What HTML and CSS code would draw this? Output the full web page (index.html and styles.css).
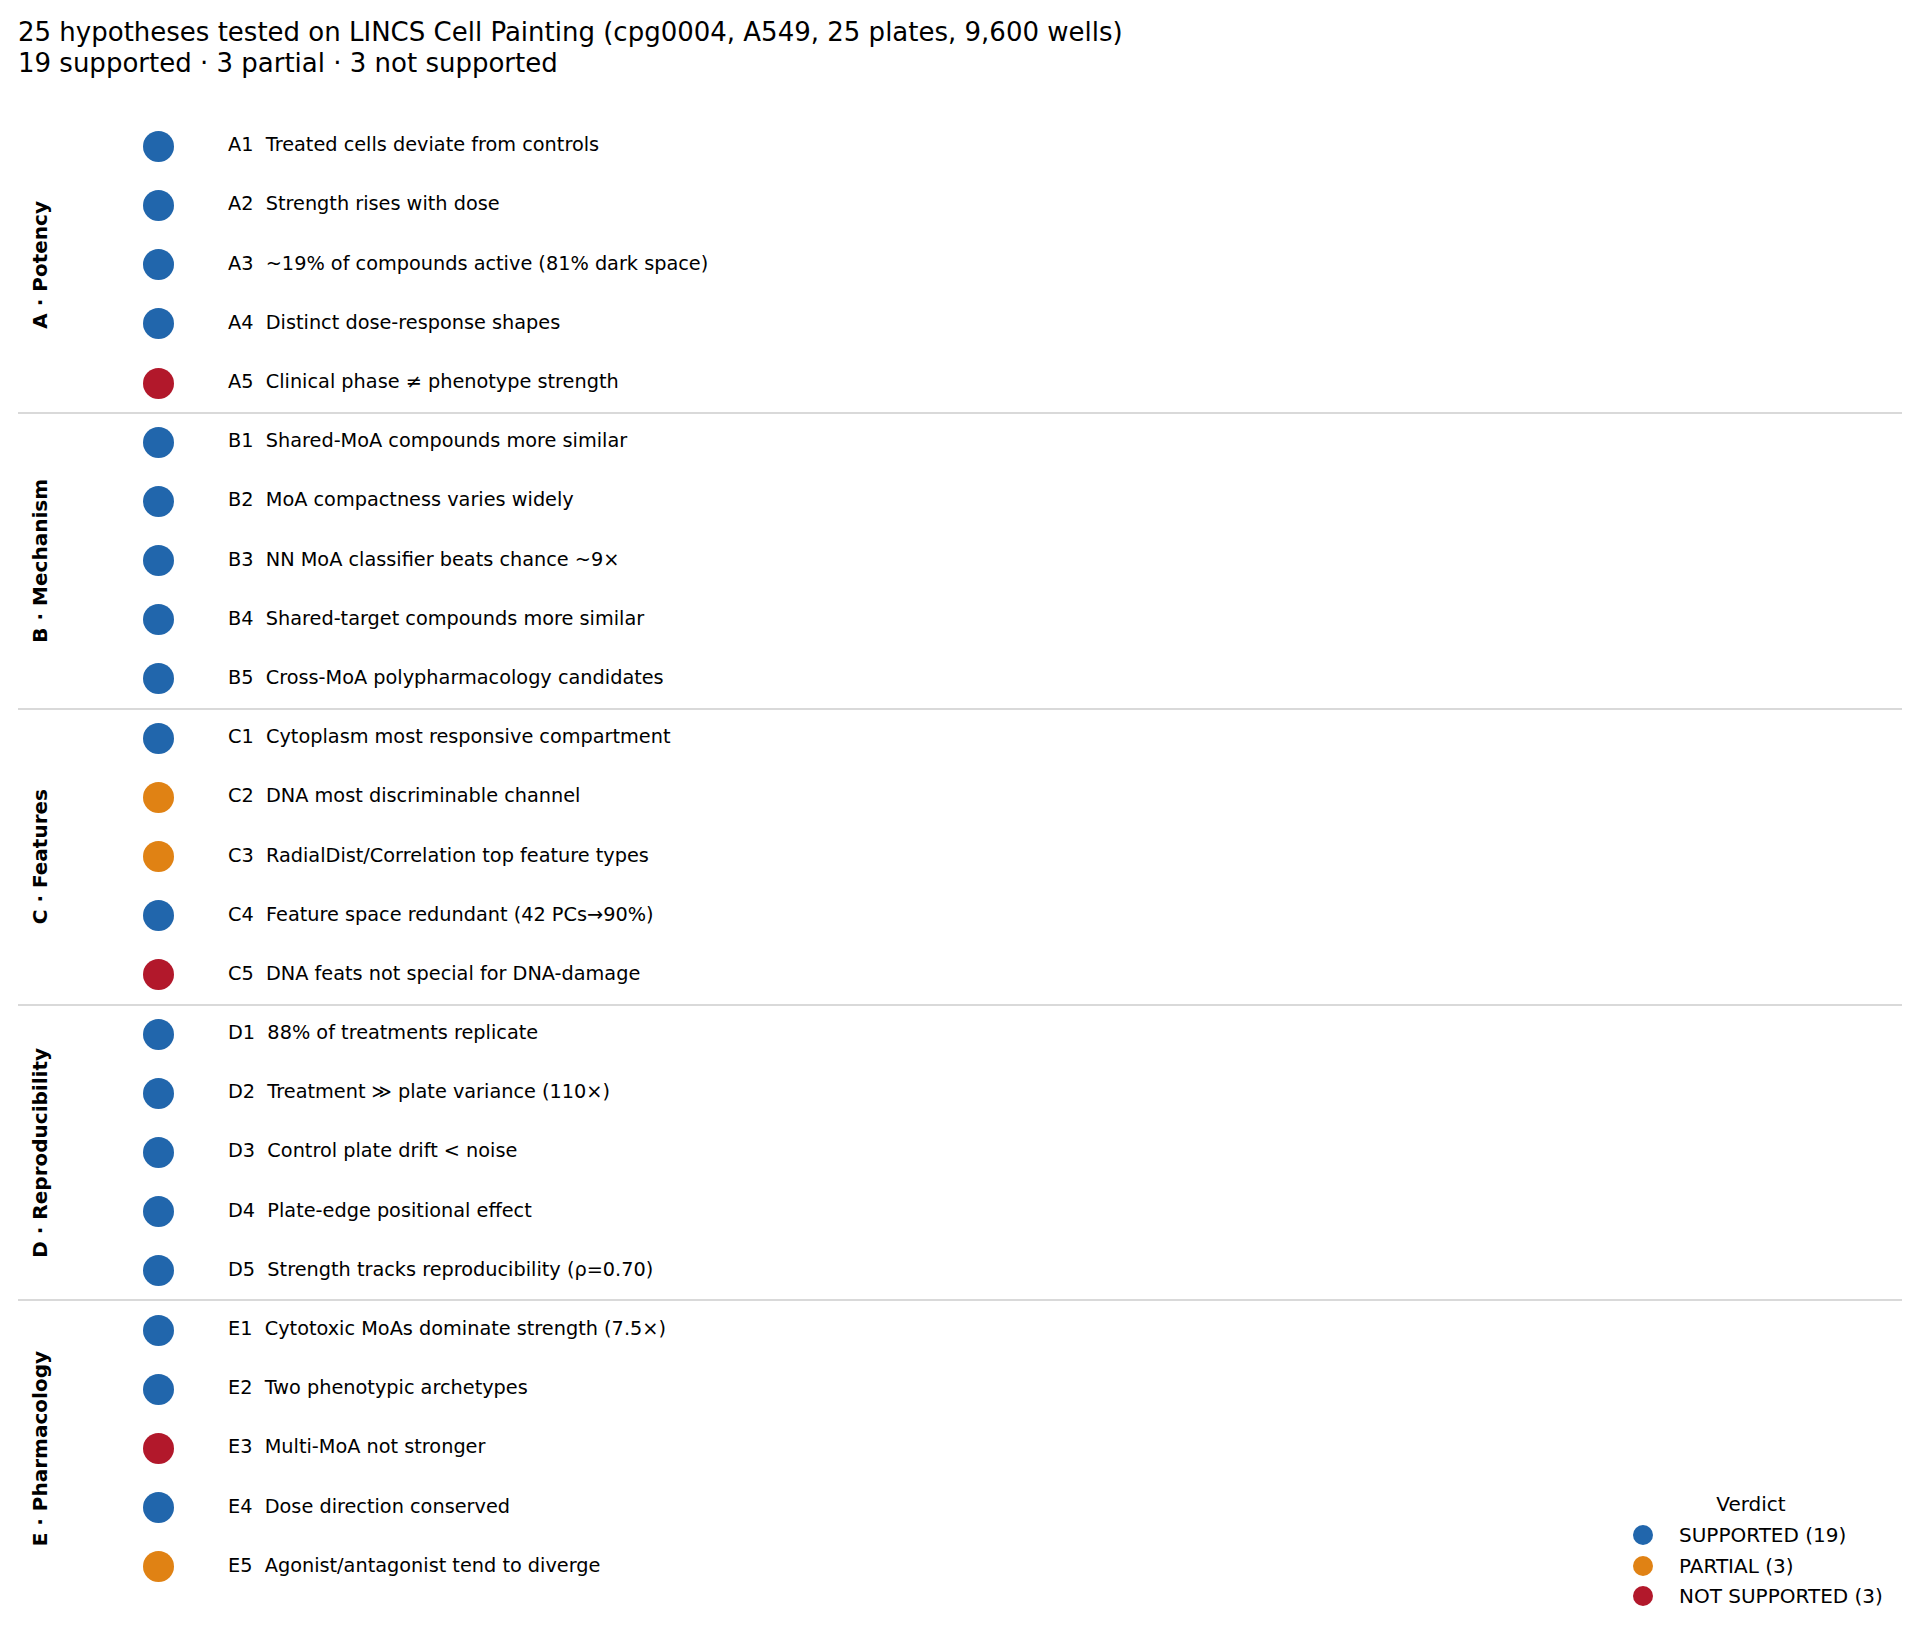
FILE: index.html
```html
<!DOCTYPE html>
<html>
<head>
<meta charset="utf-8">
<link rel="stylesheet" href="styles.css">
</head>
<body>
<div class="fig">
  <header class="title">
    <div class="title-line">25 hypotheses tested on LINCS Cell Painting (cpg0004, A549, 25 plates, 9,600 wells)</div>
    <div class="title-line">19 supported · 3 partial · 3 not supported</div>
  </header>
  <main class="chart">
    <section class="group">
      <div class="glabel"><span>A · Potency</span></div>
      <div class="rows">
        <div class="row"><span class="dot sup"></span><span class="txt">A1  Treated cells deviate from controls</span></div>
        <div class="row"><span class="dot sup"></span><span class="txt">A2  Strength rises with dose</span></div>
        <div class="row"><span class="dot sup"></span><span class="txt">A3  ~19% of compounds active (81% dark space)</span></div>
        <div class="row"><span class="dot sup"></span><span class="txt">A4  Distinct dose-response shapes</span></div>
        <div class="row"><span class="dot not"></span><span class="txt">A5  Clinical phase ≠ phenotype strength</span></div>
      </div>
    </section>
    <section class="group sep">
      <div class="glabel"><span>B · Mechanism</span></div>
      <div class="rows">
        <div class="row"><span class="dot sup"></span><span class="txt">B1  Shared-MoA compounds more similar</span></div>
        <div class="row"><span class="dot sup"></span><span class="txt">B2  MoA compactness varies widely</span></div>
        <div class="row"><span class="dot sup"></span><span class="txt">B3  NN MoA classifier beats chance ~9×</span></div>
        <div class="row"><span class="dot sup"></span><span class="txt">B4  Shared-target compounds more similar</span></div>
        <div class="row"><span class="dot sup"></span><span class="txt">B5  Cross-MoA polypharmacology candidates</span></div>
      </div>
    </section>
    <section class="group sep">
      <div class="glabel"><span>C · Features</span></div>
      <div class="rows">
        <div class="row"><span class="dot sup"></span><span class="txt">C1  Cytoplasm most responsive compartment</span></div>
        <div class="row"><span class="dot par"></span><span class="txt">C2  DNA most discriminable channel</span></div>
        <div class="row"><span class="dot par"></span><span class="txt">C3  RadialDist/Correlation top feature types</span></div>
        <div class="row"><span class="dot sup"></span><span class="txt">C4  Feature space redundant (42 PCs→90%)</span></div>
        <div class="row"><span class="dot not"></span><span class="txt">C5  DNA feats not special for DNA-damage</span></div>
      </div>
    </section>
    <section class="group sep">
      <div class="glabel"><span>D · Reproducibility</span></div>
      <div class="rows">
        <div class="row"><span class="dot sup"></span><span class="txt">D1  88% of treatments replicate</span></div>
        <div class="row"><span class="dot sup"></span><span class="txt">D2  Treatment ≫ plate variance (110×)</span></div>
        <div class="row"><span class="dot sup"></span><span class="txt">D3  Control plate drift &lt; noise</span></div>
        <div class="row"><span class="dot sup"></span><span class="txt">D4  Plate-edge positional effect</span></div>
        <div class="row"><span class="dot sup"></span><span class="txt">D5  Strength tracks reproducibility (ρ=0.70)</span></div>
      </div>
    </section>
    <section class="group sep">
      <div class="glabel"><span>E · Pharmacology</span></div>
      <div class="rows">
        <div class="row"><span class="dot sup"></span><span class="txt">E1  Cytotoxic MoAs dominate strength (7.5×)</span></div>
        <div class="row"><span class="dot sup"></span><span class="txt">E2  Two phenotypic archetypes</span></div>
        <div class="row"><span class="dot not"></span><span class="txt">E3  Multi-MoA not stronger</span></div>
        <div class="row"><span class="dot sup"></span><span class="txt">E4  Dose direction conserved</span></div>
        <div class="row"><span class="dot par"></span><span class="txt">E5  Agonist/antagonist tend to diverge</span></div>
      </div>
    </section>
    <aside class="legend">
      <div class="legend-title">Verdict</div>
      <div class="legend-item"><span class="ldot sup"></span><span>SUPPORTED (19)</span></div>
      <div class="legend-item"><span class="ldot par"></span><span>PARTIAL (3)</span></div>
      <div class="legend-item"><span class="ldot not"></span><span>NOT SUPPORTED (3)</span></div>
    </aside>
  </main>
</div>
</body>
</html>
```
FILE: styles.css
```css
* { box-sizing: border-box; }
html, body {
  margin: 0;
  padding: 0;
  background: #ffffff;
}
body {
  font-family: "DejaVu Sans", sans-serif;
  color: #000000;
  width: 1920px;
  height: 1645px;
  overflow: hidden;
}
.fig {
  width: 1920px;
  height: 1645px;
}
.title {
  padding: 17px 0 0 18px;
  font-size: 26px;
  line-height: 30.6px;
}
.title-line { white-space: pre; }

.chart {
  position: relative;
  margin: 38.5px 0 0 18px;
  width: 1884px;
}
.group {
  display: flex;
}
.group.sep {
  box-shadow: 0 -1px 0 0 #d9d9d9, inset 0 1px 0 0 #d9d9d9;
}
.glabel {
  width: 44px;
  display: flex;
  align-items: center;
  justify-content: center;
}
.glabel span {
  writing-mode: vertical-rl;
  transform: rotate(180deg);
  font-weight: bold;
  font-size: 20px;
  line-height: 24px;
  white-space: pre;
}
.rows {
  display: flex;
  flex-direction: column;
}
.row {
  height: 59.19px;
  display: flex;
  align-items: center;
}
.dot {
  width: 31px;
  height: 31px;
  border-radius: 50%;
  margin-left: 81px;
  flex: none;
}
.txt {
  margin-left: 54px;
  font-size: 19.3px;
  line-height: 22px;
  white-space: pre;
  margin-bottom: 2px;
}
.sup { background: #2166ac; }
.par { background: #e08214; }
.not { background: #b2182b; }

.legend {
  position: absolute;
  right: 0;
  bottom: -15.5px;
  width: 290px;
  display: flex;
  flex-direction: column;
  font-size: 20px;
}
.legend-title {
  text-align: center;
  line-height: 30px;
  padding-right: 12px;
}
.legend-item {
  display: flex;
  align-items: center;
  height: 30.8px;
}
.ldot {
  width: 20px;
  height: 20px;
  border-radius: 50%;
  margin-left: 21px;
  margin-right: 26px;
  flex: none;
}
```
